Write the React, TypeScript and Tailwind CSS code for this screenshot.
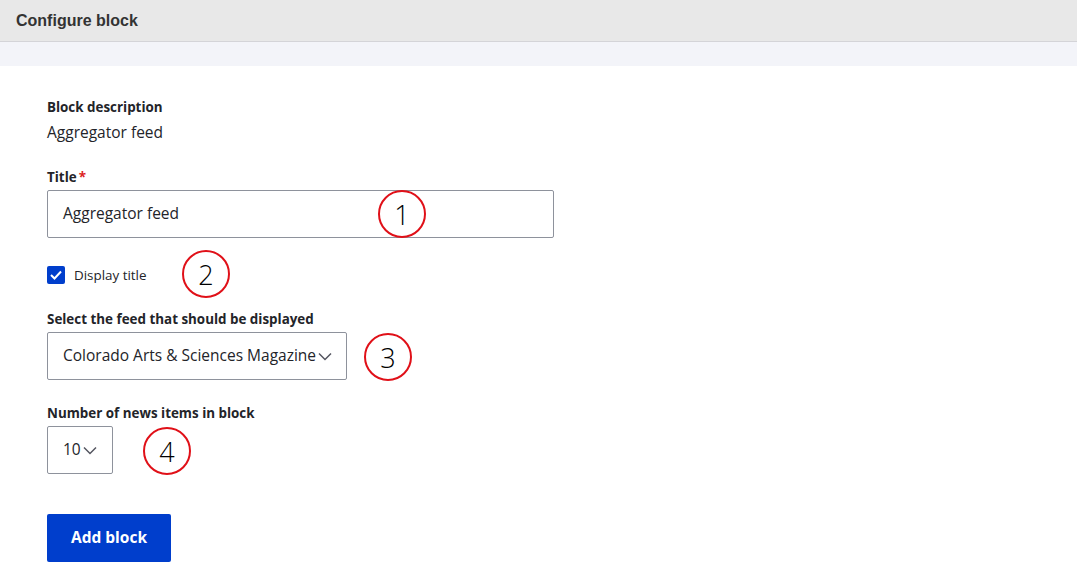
import React from 'react';

const FONT = { fontFamily: '"Open Sans", "Noto Sans", "Liberation Sans", sans-serif' };

function Marker({ n, className }: { n: number; className: string }) {
  return (
    <div
      className={`absolute w-[48px] h-[48px] rounded-full border-[2.5px] border-[#e01018] flex items-center justify-center text-[27px] font-light text-black leading-none ${className}`}
    >
      {n}
    </div>
  );
}

function Chevron() {
  return (
    <svg width="14" height="9" viewBox="0 0 14 9" fill="none" className="shrink-0">
      <path d="M1 1.5l6 6 6-6" stroke="#545560" strokeWidth="1.5" />
    </svg>
  );
}

export default function App() {
  return (
    <div className="min-h-[583px] bg-white text-[#232429]" style={FONT}>
      <div className="h-[42px] bg-[#e8e8e8] border-b border-[#d4d4d8] flex items-center px-[16px]">
        <h1 className="text-[16px] font-bold text-[#333]" style={{ fontFamily: '"Liberation Sans", sans-serif' }}>
          Configure block
        </h1>
      </div>
      <div className="h-[24px] bg-[#f3f4f9]" />

      <form className="px-[47px] pt-[32px]">
        <div>
          <div className="text-[13.4px] font-bold leading-[18px]">Block description</div>
          <div className="text-[15.5px] mt-[6px] leading-[20px]">Aggregator feed</div>
        </div>

        <div className="mt-[26px] relative w-[507px]">
          <label className="block text-[13.4px] font-bold leading-[18px]">
            Title<span className="text-[#dc2323] ml-[2px]">*</span>
          </label>
          <div className="mt-[4px] h-[48px] border border-[#8e929c] rounded-[2px] flex items-center px-[15px] text-[15.5px]">
            Aggregator feed
          </div>
          <Marker n={1} className="left-[331px] top-[22px]" />
        </div>

        <div className="mt-[28px] relative flex items-center gap-[9px]">
          <span className="w-[18px] h-[18px] rounded-[2px] bg-[#003ecc] flex items-center justify-center">
            <svg width="12" height="10" viewBox="0 0 12 10" fill="none">
              <path d="M1 5l3.5 3.5L11 1.5" stroke="white" strokeWidth="2" />
            </svg>
          </span>
          <span className="text-[13.4px] leading-[18px]">Display title</span>
          <Marker n={2} className="left-[135px] -top-[16px]" />
        </div>

        <div className="mt-[26px] relative w-[300px]">
          <label className="block text-[13.4px] font-bold leading-[18px]">Select the feed that should be displayed</label>
          <div className="mt-[4px] h-[48px] border border-[#8e929c] rounded-[2px] flex items-center pl-[15px] pr-[16px] gap-[2px] text-[15.5px]">
            <span className="whitespace-nowrap">Colorado Arts &amp; Sciences Magazine</span>
            <Chevron />
          </div>
          <Marker n={3} className="left-[317px] top-[23px]" />
        </div>

        <div className="mt-[24px] relative w-[66px]">
          <label className="block text-[13.4px] font-bold leading-[18px] whitespace-nowrap">Number of news items in block</label>
          <div className="mt-[4px] h-[48px] border border-[#8e929c] rounded-[2px] flex items-center pl-[15px] gap-[2px] text-[15.5px]">
            <span>10</span>
            <Chevron />
          </div>
          <Marker n={4} className="left-[96px] top-[23px]" />
        </div>

        <button
          type="button"
          className="mt-[40px] h-[48px] w-[124px] bg-[#003ecc] text-white text-[15.5px] font-bold rounded-[2px]"
        >
          Add block
        </button>
      </form>
    </div>
  );
}
